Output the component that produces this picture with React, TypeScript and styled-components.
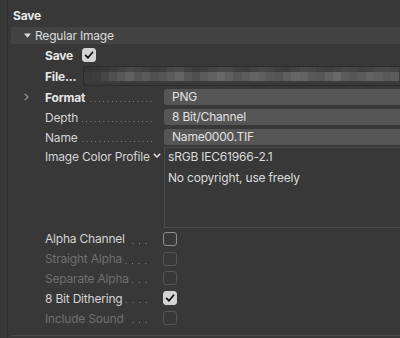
import React from 'react';
import styled, { createGlobalStyle } from 'styled-components';

const GlobalStyle = createGlobalStyle`
  html, body {
    margin: 0;
    padding: 0;
    background: #383838;
  }
  body {
    font-family: Inter, "Liberation Sans", sans-serif;
    font-size: 12px;
    letter-spacing: -0.2px;
    color: #d6d6d6;
    -webkit-font-smoothing: antialiased;
  }
`;

const Page = styled.div`
  width: 400px;
  height: 338px;
  overflow: hidden;
  background: #383838;
  display: flex;
`;

const Gutter = styled.div`
  width: 7px;
  flex: none;
  border-right: 1px solid #2f2f2f;
`;

const Main = styled.div`
  flex: 1;
  display: flex;
  flex-direction: column;
  min-width: 0;
`;

const Title = styled.div`
  height: 27px;
  box-sizing: border-box;
  padding: 8px 0 0 5px;
  line-height: 16px;
  font-weight: 700;
  color: #e8e8e8;
`;

const Group = styled.div`
  margin-left: 3px;
  height: 308px;
  border-bottom: 1px solid #4a4a4a;
  display: flex;
  flex-direction: column;
`;

const GroupHeader = styled.div`
  height: 17px;
  background: #434343;
  display: flex;
  align-items: center;
  gap: 4px;
  padding-left: 13px;
  color: #dcdcdc;
`;

const Body = styled.div`
  display: flex;
  flex-direction: column;
  padding-top: 1px;
`;

const SimpleRow = styled.div<{ $h: number }>`
  height: ${(p) => p.$h}px;
  display: flex;
  align-items: center;
  padding-left: 34px;
`;

const SimpleLabel = styled.div`
  width: 37px;
  flex: none;
  font-weight: 700;
  color: #e6e6e6;
`;

const Row = styled.div<{ $h?: number; $top?: boolean }>`
  height: ${(p) => p.$h ?? 20}px;
  display: grid;
  grid-template-columns: 34px 119px 1fr;
  align-items: ${(p) => (p.$top ? 'start' : 'center')};
`;

const Lead = styled.div`
  display: flex;
  align-items: center;
  padding-left: 13px;
`;

const LabelCell = styled.div<{ $wide?: boolean }>`
  display: flex;
  align-items: center;
  min-width: 0;
  padding-right: ${(p) => (p.$wide ? 9 : 12)}px;
  height: 18px;
`;

const Label = styled.span<{ $bold?: boolean; $off?: boolean }>`
  white-space: nowrap;
  font-weight: ${(p) => (p.$bold ? 700 : 400)};
  color: ${(p) => (p.$off ? '#6f6f6f' : p.$bold ? '#e6e6e6' : '#d4d4d4')};
`;

const Dots = styled.span<{ $step: number }>`
  flex: 1;
  align-self: stretch;
  margin-left: 3px;
  background-image: linear-gradient(to right, #8a8a8a 1px, transparent 1px);
  background-size: ${(p) => p.$step}px 1px;
  background-repeat: repeat-x;
  background-position: right 0 bottom 4px;
`;

const Field = styled.div`
  height: 16px;
  border-radius: 3px 0 0 3px;
  background: #555555;
  color: #e2e2e2;
  padding-left: 8px;
  line-height: 16px;
`;

const Mosaic = styled.div`
  height: 18px;
  flex: 1;
  margin-left: 1px;
  border: 1px solid #2c2c2c;
  border-right: none;
  border-radius: 3px 0 0 3px;
  overflow: hidden;
  display: flex;
`;

const ProfileBox = styled.div`
  height: 81px;
  box-sizing: border-box;
  border: 1px solid #4c4c4c;
  border-right: none;
  padding: 0 0 0 3px;
  color: #dcdcdc;
  line-height: 18px;
`;

const ProfileLine = styled.div<{ $gap?: number }>`
  margin-top: ${(p) => p.$gap ?? 0}px;
`;

const ChevronSlot = styled.span`
  margin-left: auto;
  margin-right: -9px;
  margin-top: -2px;
  display: flex;
`;

const CheckSlot = styled.span`
  margin-left: -1px;
  display: flex;
`;

const Box = styled.div<{ $checked?: boolean; $off?: boolean }>`
  width: 14px;
  height: 14px;
  box-sizing: border-box;
  border-radius: 3px;
  border: 1px solid ${(p) => (p.$checked ? '#d4d4d4' : p.$off ? '#555555' : '#8c8c8c')};
  background: ${(p) => (p.$checked ? '#d4d4d4' : 'transparent')};
  display: flex;
  align-items: center;
  justify-content: center;
`;

const Check = ({ checked, off }: { checked?: boolean; off?: boolean }) => (
  <Box $checked={checked} $off={off}>
    {checked && (
      <svg width="10" height="10" viewBox="0 0 10 10">
        <path d="M1.6 5.4 L4 7.8 L8.6 2.2" fill="none" stroke="#111" strokeWidth="1.7" strokeLinecap="round" strokeLinejoin="round" />
      </svg>
    )}
  </Box>
);

const DownTri = () => (
  <svg width="7" height="5" viewBox="0 0 7 5">
    <path d="M0 0.5 H7 L3.5 4.8 Z" fill="#dcdcdc" />
  </svg>
);

const RightChevron = () => (
  <svg width="5" height="8" viewBox="0 0 5 8">
    <path d="M0.8 0.8 L4 4 L0.8 7.2" fill="none" stroke="#9a9a9a" strokeWidth="1.2" />
  </svg>
);

const DownChevron = () => (
  <svg width="8" height="5" viewBox="0 0 8 5">
    <path d="M0.8 0.8 L4 4 L7.2 0.8" fill="none" stroke="#e0e0e0" strokeWidth="1.5" />
  </svg>
);

// blurred path in the File field, drawn as a pixel mosaic
const mosaicTop = [52, 54, 56, 60, 66, 72, 68, 64, 60, 62, 70, 74, 66, 60, 62, 68, 72, 70, 64, 62, 66, 70, 68, 62, 60, 66, 72, 70, 64, 62, 66, 70, 68, 64, 66, 70, 72, 68];
const mosaicBottom = [58, 62, 70, 80, 88, 96, 84, 90, 80, 86, 92, 100, 86, 80, 90, 96, 104, 94, 86, 92, 100, 96, 88, 84, 94, 102, 98, 88, 86, 96, 104, 92, 86, 90, 98, 94, 88, 92];

const FileMosaic = () => (
  <svg width="320" height="16" viewBox="0 0 320 16" shapeRendering="crispEdges">
    <rect x="0" y="0" width="320" height="16" fill="#3c3c3c" />
    {mosaicTop.map((v, i) => (
      <rect key={'t' + i} x={i * 8.4} y={0} width={8.4} height={5} fill={`rgb(${v},${v},${v})`} />
    ))}
    {mosaicBottom.map((v, i) => (
      <rect key={'b' + i} x={i * 8.4} y={5} width={8.4} height={9} fill={`rgb(${v},${v},${v})`} />
    ))}
  </svg>
);

type CheckItem = { label: string; checked?: boolean; off?: boolean };

const checks: CheckItem[] = [
  { label: 'Alpha Channel' },
  { label: 'Straight Alpha', off: true },
  { label: 'Separate Alpha', off: true },
  { label: '8 Bit Dithering', checked: true },
  { label: 'Include Sound', off: true },
];

const App = () => (
  <>
    <GlobalStyle />
    <Page>
      <Gutter />
      <Main>
        <Title>Save</Title>
        <Group>
          <GroupHeader>
            <DownTri />
            <span>Regular Image</span>
          </GroupHeader>
          <Body>
            <SimpleRow $h={20}>
              <SimpleLabel>Save</SimpleLabel>
              <Check checked />
            </SimpleRow>
            <SimpleRow $h={22}>
              <SimpleLabel>File...</SimpleLabel>
              <Mosaic>
                <FileMosaic />
              </Mosaic>
            </SimpleRow>
            <Row>
              <Lead>
                <RightChevron />
              </Lead>
              <LabelCell $wide>
                <Label $bold>Format</Label>
                <Dots $step={4.3} />
              </LabelCell>
              <Field>PNG</Field>
            </Row>
            <Row>
              <Lead />
              <LabelCell $wide>
                <Label>Depth</Label>
                <Dots $step={4.3} />
              </LabelCell>
              <Field>8 Bit/Channel</Field>
            </Row>
            <Row>
              <Lead />
              <LabelCell $wide>
                <Label>Name</Label>
                <Dots $step={4.3} />
              </LabelCell>
              <Field>Name0000.TIF</Field>
            </Row>
            <Row $h={82} $top>
              <Lead />
              <LabelCell>
                <Label>Image Color Profile</Label>
                <ChevronSlot>
                  <DownChevron />
                </ChevronSlot>
              </LabelCell>
              <ProfileBox>
                <ProfileLine>sRGB IEC61966-2.1</ProfileLine>
                <ProfileLine $gap={3}>No copyright, use freely</ProfileLine>
              </ProfileBox>
            </Row>
            {checks.map((c) => (
              <Row key={c.label} $h={19.8}>
                <Lead />
                <LabelCell>
                  <Label $off={c.off}>{c.label}</Label>
                  <Dots $step={6.6} />
                </LabelCell>
                <CheckSlot>
                  <Check checked={c.checked} off={c.off} />
                </CheckSlot>
              </Row>
            ))}
          </Body>
        </Group>
      </Main>
    </Page>
  </>
);

export default App;
